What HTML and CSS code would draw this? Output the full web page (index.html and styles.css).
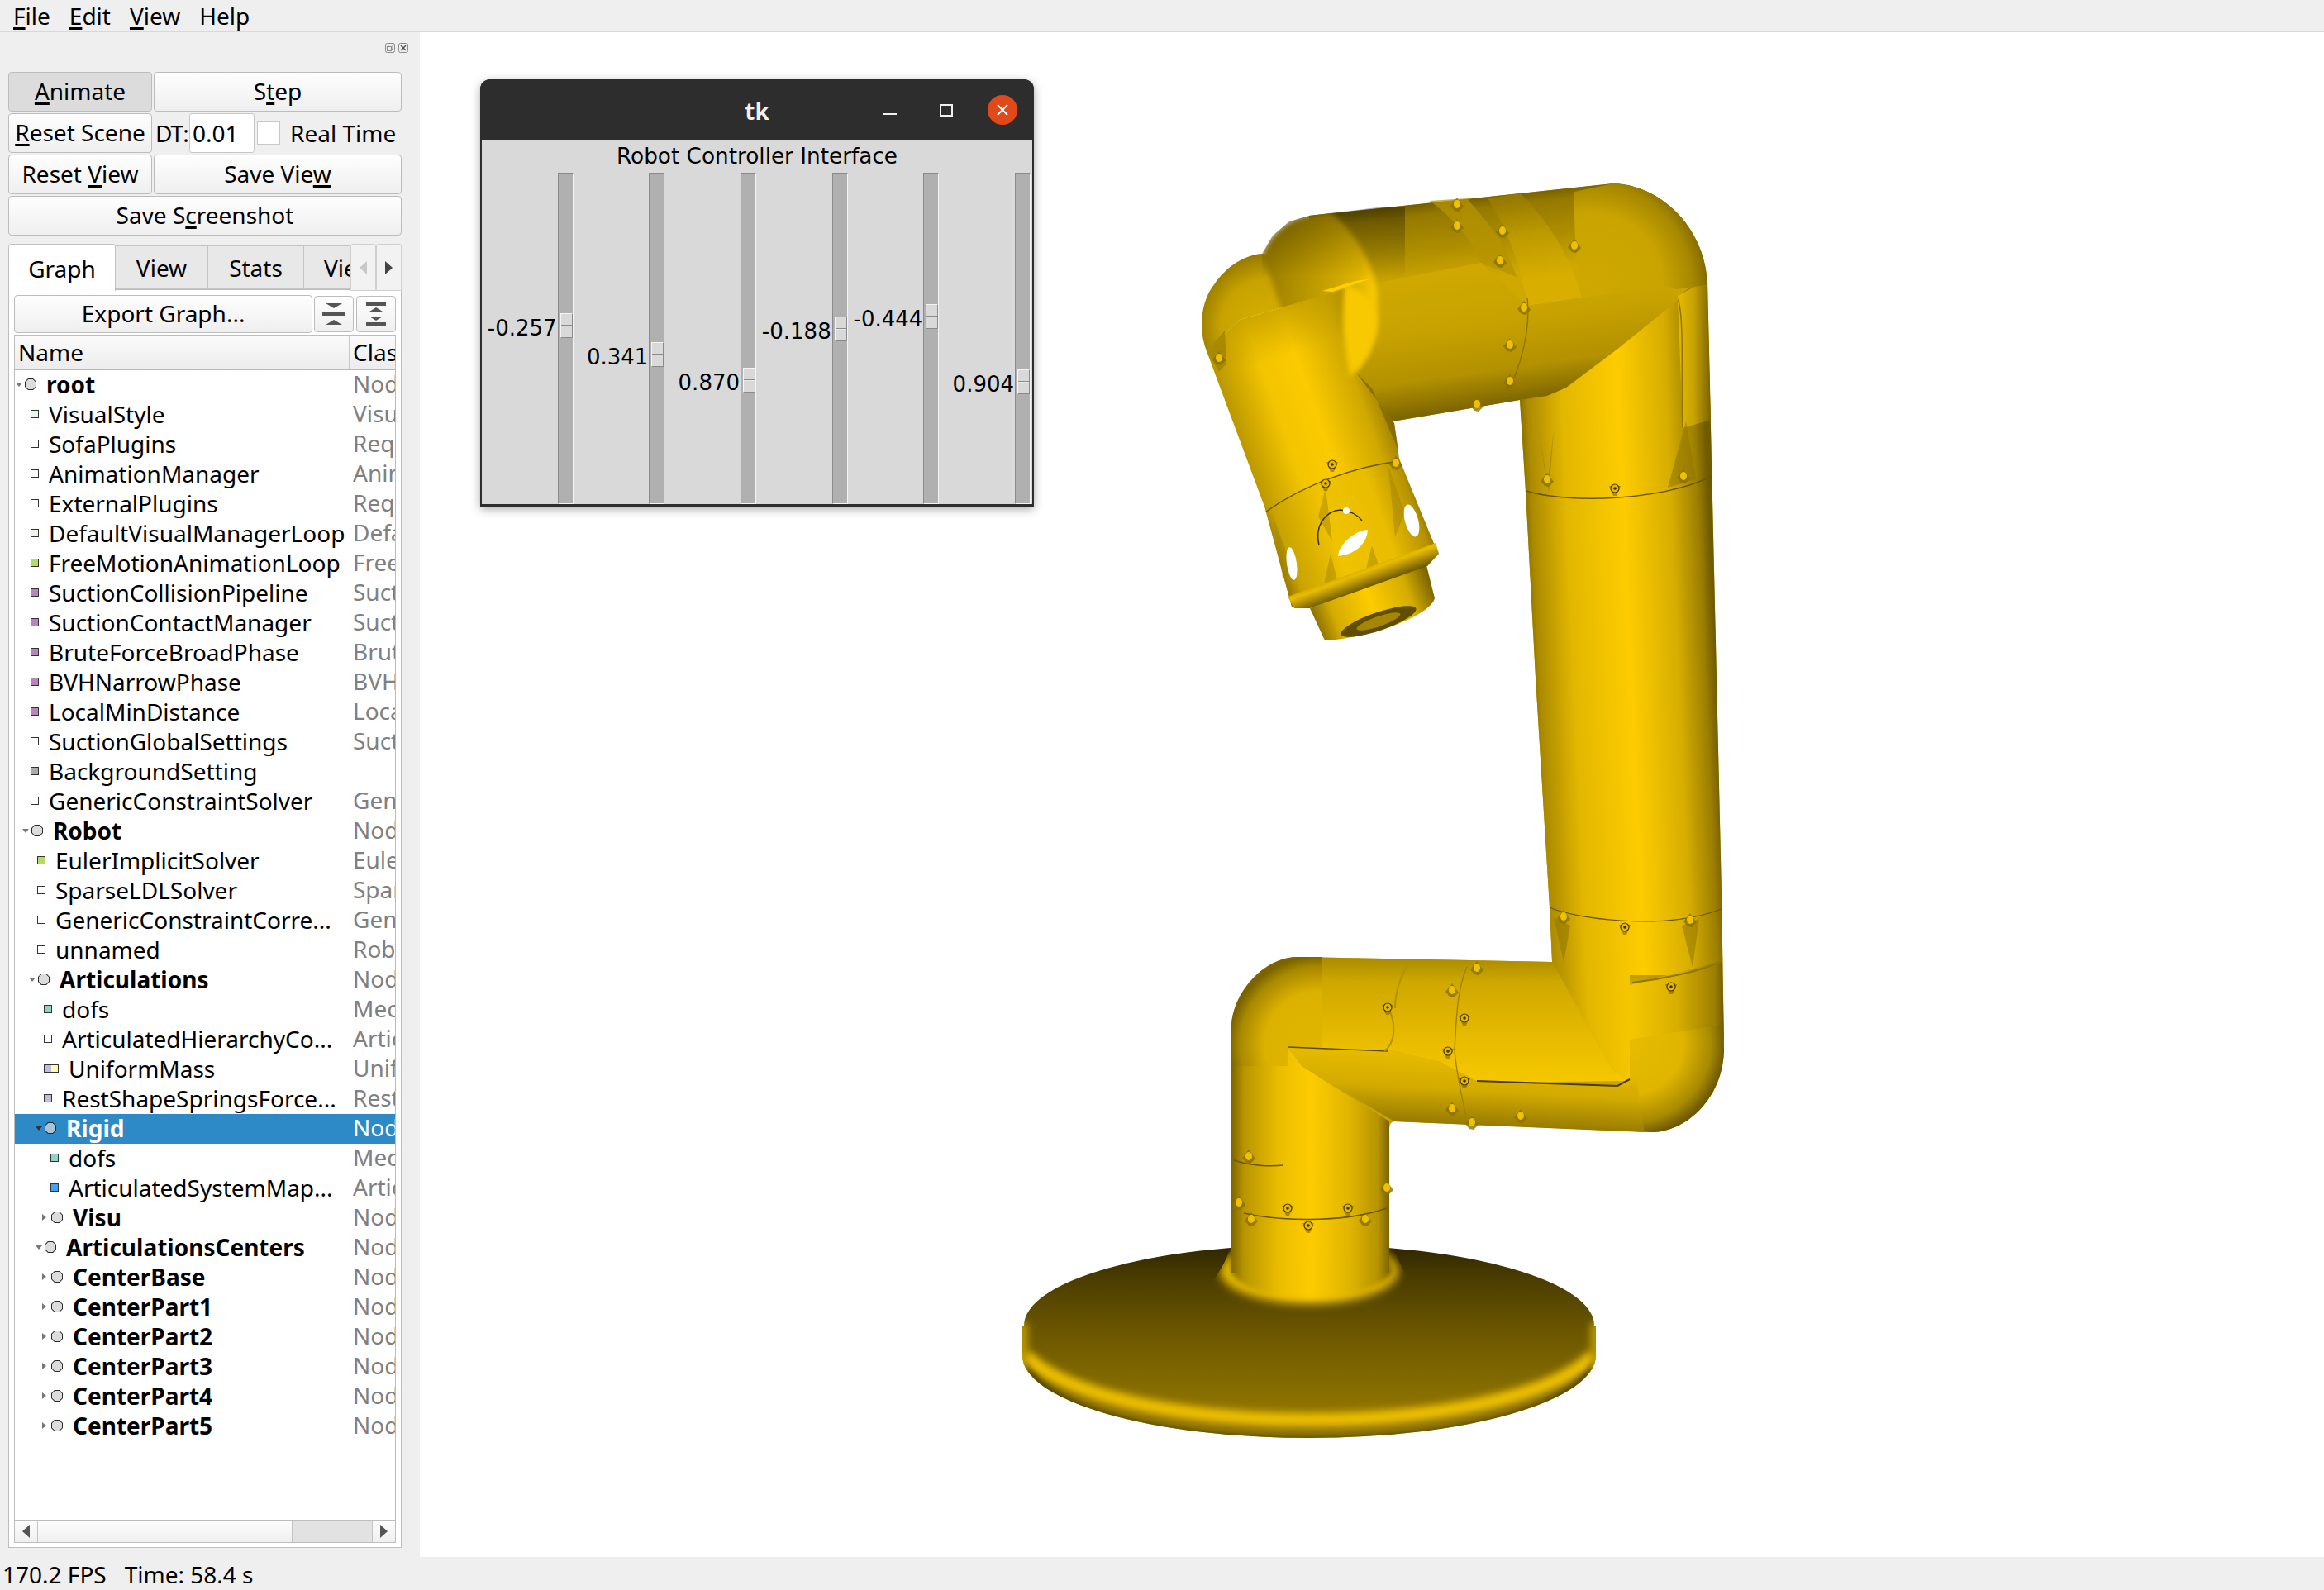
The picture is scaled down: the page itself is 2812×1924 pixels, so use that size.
FILE: index.html
```html
<!DOCTYPE html>
<html lang="en">
<head>
<meta charset="utf-8">
<title>SOFA</title>
<link rel="stylesheet" href="styles.css">
</head>
<body>
<div class="app">
  <nav class="menu">
    <span><u>F</u>ile</span><span><u>E</u>dit</span><span><u>V</u>iew</span><span>Help</span>
  </nav>
  <div class="main">
    <aside class="side">
      <div class="dock-icons">
        <svg width="12" height="12" viewBox="0 0 12 12"><rect x="0.5" y="0.5" width="11" height="11" rx="2" fill="none" stroke="#8a8a8a"/><rect x="4" y="2.5" width="5" height="5" fill="none" stroke="#8a8a8a"/><rect x="2.5" y="4.5" width="5" height="5" fill="#efefef" stroke="#8a8a8a"/></svg>
        <svg width="12" height="12" viewBox="0 0 12 12"><rect x="0.5" y="0.5" width="11" height="11" rx="2" fill="none" stroke="#8a8a8a"/><path d="M3 3l6 6M9 3l-6 6" stroke="#555" stroke-width="1.6"/></svg>
      </div>
      <div class="ctl-row">
        <button class="btn w-left on"><u>A</u>nimate</button>
        <button class="btn grow">S<u>t</u>ep</button>
      </div>
      <div class="ctl-row">
        <button class="btn w-left"><u>R</u>eset Scene</button>
        <span class="dt">DT:</span>
        <span class="input">0.01</span>
        <span class="check"></span>
        <span class="rt">Real Time</span>
      </div>
      <div class="ctl-row">
        <button class="btn w-left">Reset <u>V</u>iew</button>
        <button class="btn grow">Save Vie<u>w</u></button>
      </div>
      <div class="ctl-row">
        <button class="btn grow">Save S<u>c</u>reenshot</button>
      </div>

      <div class="tabs">
        <div class="tabbar">
          <span class="tab active t-graph">Graph</span>
          <span class="tab t-view">View</span>
          <span class="tab t-stats">Stats</span>
          <span class="tab t-vie">Viewer</span>
        </div>
        <div class="tab-scroll">
          <span class="ts"><svg width="10" height="16" viewBox="0 0 10 16"><path d="M9 0v16L0 8z" fill="#c8c8c8"/></svg></span>
          <span class="ts"><svg width="10" height="16" viewBox="0 0 10 16"><path d="M0 0v16l9-8z" fill="#444"/></svg></span>
        </div>
      </div>
      <div class="pane">
        <div class="tools">
          <button class="btn export">Export Graph...</button>
          <button class="btn ico"><svg width="28" height="28" viewBox="0 0 28 28"><path d="M4 1h20L14 7z" fill="#555"/><rect y="12" width="28" height="4" fill="#555"/><path d="M4 27h20L14 21z" fill="#555"/></svg></button>
          <button class="btn ico"><svg width="24" height="28" viewBox="0 0 24 28"><rect width="24" height="4" fill="#555"/><path d="M4 11h16L12 6z" fill="#555"/><path d="M4 17h16l-8 5z" fill="#555"/><rect y="24" width="24" height="4" fill="#555"/></svg></button>
        </div>
        <div class="table">
          <div class="thead"><span class="th-name">Name</span><span class="th-class">Class</span></div>
          <div class="tbody">
            <div class="row node d0"><span class="name"><i class="arr"></i><i class="oct"></i>root</span><span class="cls">Node</span></div>
            <div class="row comp d1"><span class="name"><i class="sq lg"></i>VisualStyle</span><span class="cls">VisualStyle</span></div>
            <div class="row comp d1"><span class="name"><i class="sq wh"></i>SofaPlugins</span><span class="cls">RequiredPlugin</span></div>
            <div class="row comp d1"><span class="name"><i class="sq wh"></i>AnimationManager</span><span class="cls">AnimationManager</span></div>
            <div class="row comp d1"><span class="name"><i class="sq wh"></i>ExternalPlugins</span><span class="cls">RequiredPlugin</span></div>
            <div class="row comp d1"><span class="name"><i class="sq lg"></i>DefaultVisualManagerLoop</span><span class="cls">DefaultVisualManagerLoop</span></div>
            <div class="row comp d1"><span class="name"><i class="sq gr"></i>FreeMotionAnimationLoop</span><span class="cls">FreeMotionAnimationLoop</span></div>
            <div class="row comp d1"><span class="name"><i class="sq pu"></i>SuctionCollisionPipeline</span><span class="cls">SuctionCollisionPipeline</span></div>
            <div class="row comp d1"><span class="name"><i class="sq pu"></i>SuctionContactManager</span><span class="cls">SuctionContactManager</span></div>
            <div class="row comp d1"><span class="name"><i class="sq pu"></i>BruteForceBroadPhase</span><span class="cls">BruteForceBroadPhase</span></div>
            <div class="row comp d1"><span class="name"><i class="sq pu"></i>BVHNarrowPhase</span><span class="cls">BVHNarrowPhase</span></div>
            <div class="row comp d1"><span class="name"><i class="sq pu"></i>LocalMinDistance</span><span class="cls">LocalMinDistance</span></div>
            <div class="row comp d1"><span class="name"><i class="sq wh"></i>SuctionGlobalSettings</span><span class="cls">SuctionGlobalSettings</span></div>
            <div class="row comp d1"><span class="name"><i class="sq gy"></i>BackgroundSetting</span><span class="cls"></span></div>
            <div class="row comp d1"><span class="name"><i class="sq wh"></i>GenericConstraintSolver</span><span class="cls">GenericConstraintSolver</span></div>
            <div class="row node d1"><span class="name"><i class="arr"></i><i class="oct"></i>Robot</span><span class="cls">Node</span></div>
            <div class="row comp d2"><span class="name"><i class="sq gr"></i>EulerImplicitSolver</span><span class="cls">EulerImplicitSolver</span></div>
            <div class="row comp d2"><span class="name"><i class="sq wh"></i>SparseLDLSolver</span><span class="cls">SparseLDLSolver</span></div>
            <div class="row comp d2"><span class="name"><i class="sq wh"></i>GenericConstraintCorre...</span><span class="cls">GenericConstraintCorrection</span></div>
            <div class="row comp d2"><span class="name"><i class="sq wh"></i>unnamed</span><span class="cls">Robot</span></div>
            <div class="row node d2"><span class="name"><i class="arr"></i><i class="oct"></i>Articulations</span><span class="cls">Node</span></div>
            <div class="row comp d3"><span class="name"><i class="sq te"></i>dofs</span><span class="cls">MechanicalObject</span></div>
            <div class="row comp d3"><span class="name"><i class="sq wh"></i>ArticulatedHierarchyCo...</span><span class="cls">ArticulatedHierarchyContainer</span></div>
            <div class="row comp d3"><span class="name"><i class="sq wide"></i>UniformMass</span><span class="cls">UniformMass</span></div>
            <div class="row comp d3"><span class="name"><i class="sq li"></i>RestShapeSpringsForce...</span><span class="cls">RestShapeSpringsForceField</span></div>
            <div class="row node d3 sel"><span class="name"><i class="arr"></i><i class="oct"></i>Rigid</span><span class="cls">Node</span></div>
            <div class="row comp d4"><span class="name"><i class="sq te"></i>dofs</span><span class="cls">MechanicalObject</span></div>
            <div class="row comp d4"><span class="name"><i class="sq bl"></i>ArticulatedSystemMap...</span><span class="cls">ArticulatedSystemMapping</span></div>
            <div class="row node d4 shut"><span class="name"><i class="arr"></i><i class="oct"></i>Visu</span><span class="cls">Node</span></div>
            <div class="row node d3"><span class="name"><i class="arr"></i><i class="oct"></i>ArticulationsCenters</span><span class="cls">Node</span></div>
            <div class="row node d4 shut"><span class="name"><i class="arr"></i><i class="oct"></i>CenterBase</span><span class="cls">Node</span></div>
            <div class="row node d4 shut"><span class="name"><i class="arr"></i><i class="oct"></i>CenterPart1</span><span class="cls">Node</span></div>
            <div class="row node d4 shut"><span class="name"><i class="arr"></i><i class="oct"></i>CenterPart2</span><span class="cls">Node</span></div>
            <div class="row node d4 shut"><span class="name"><i class="arr"></i><i class="oct"></i>CenterPart3</span><span class="cls">Node</span></div>
            <div class="row node d4 shut"><span class="name"><i class="arr"></i><i class="oct"></i>CenterPart4</span><span class="cls">Node</span></div>
            <div class="row node d4 shut"><span class="name"><i class="arr"></i><i class="oct"></i>CenterPart5</span><span class="cls">Node</span></div>
          </div>
          <div class="hscroll">
            <span class="sb-btn"><svg width="10" height="16" viewBox="0 0 10 16"><path d="M9 0v16L0 8z" fill="#555"/></svg></span>
            <span class="sb-thumb"></span>
            <span class="sb-groove"></span>
            <span class="sb-btn"><svg width="10" height="16" viewBox="0 0 10 16"><path d="M0 0v16l9-8z" fill="#555"/></svg></span>
          </div>
        </div>
      </div>
    </aside>

    <section class="view">
      <svg class="robot" width="2304" height="1845" viewBox="508 39 2304 1845" aria-hidden="true">
        <defs>
          <linearGradient id="gBaseTop" gradientUnits="userSpaceOnUse" x1="0" y1="1506" x2="0" y2="1705">
            <stop offset="0" stop-color="#2e2500"/><stop offset=".2" stop-color="#4a3c00"/><stop offset=".55" stop-color="#6d5800"/><stop offset="1" stop-color="#8f7400"/>
          </linearGradient>
          <linearGradient id="gPillar" gradientUnits="userSpaceOnUse" x1="1490" y1="0" x2="1681" y2="0">
            <stop offset="0" stop-color="#7d6500"/><stop offset=".08" stop-color="#b89500"/><stop offset=".3" stop-color="#eabd00"/><stop offset=".5" stop-color="#fdcc00"/><stop offset=".75" stop-color="#e0b500"/><stop offset=".93" stop-color="#b69300"/><stop offset="1" stop-color="#7a6200"/>
          </linearGradient>
          <linearGradient id="gCol" gradientUnits="userSpaceOnUse" x1="1850" y1="900" x2="2080" y2="890">
            <stop offset="0" stop-color="#6f5a00"/><stop offset=".07" stop-color="#ab8a00"/><stop offset=".25" stop-color="#e2b700"/><stop offset=".55" stop-color="#fdcc00"/><stop offset=".8" stop-color="#d7ae00"/><stop offset=".94" stop-color="#9d7f00"/><stop offset="1" stop-color="#6f5a00"/>
          </linearGradient>
          <linearGradient id="gStrip" gradientUnits="userSpaceOnUse" x1="2030" y1="0" x2="2070" y2="0">
            <stop offset="0" stop-color="#e6bb00"/><stop offset=".5" stop-color="#c6a100"/><stop offset="1" stop-color="#7a6300"/>
          </linearGradient>
          <linearGradient id="gArmUp" gradientUnits="userSpaceOnUse" x1="1700" y1="245" x2="1712" y2="345">
            <stop offset="0" stop-color="#6b5700"/><stop offset=".18" stop-color="#957900"/><stop offset=".6" stop-color="#ae8e00"/><stop offset="1" stop-color="#cfa800"/>
          </linearGradient>
          <linearGradient id="gArmLow" gradientUnits="userSpaceOnUse" x1="1730" y1="325" x2="1755" y2="500">
            <stop offset="0" stop-color="#d0a900"/><stop offset=".4" stop-color="#c8a300"/><stop offset=".75" stop-color="#b39100"/><stop offset="1" stop-color="#7a6300"/>
          </linearGradient>
          <linearGradient id="gRing" gradientUnits="userSpaceOnUse" x1="1800" y1="235" x2="1815" y2="345">
            <stop offset="0" stop-color="#8f7400"/><stop offset=".5" stop-color="#bd9a00"/><stop offset="1" stop-color="#d8af00"/>
          </linearGradient>
          <radialGradient id="gElbowT" gradientUnits="userSpaceOnUse" cx="1925" cy="345" r="145">
            <stop offset="0" stop-color="#cfa800"/><stop offset=".6" stop-color="#c9a400"/><stop offset=".85" stop-color="#a68700"/><stop offset="1" stop-color="#7a6300"/>
          </radialGradient>
          <linearGradient id="gBump" gradientUnits="userSpaceOnUse" x1="1530" y1="350" x2="1668" y2="370">
            <stop offset="0" stop-color="#9a7d00"/><stop offset=".4" stop-color="#bc9900"/><stop offset=".8" stop-color="#dfb500"/><stop offset=".95" stop-color="#fbca00"/><stop offset="1" stop-color="#e0b600"/>
          </linearGradient>
          <linearGradient id="gBumpTop" gradientUnits="userSpaceOnUse" x1="0" y1="258" x2="0" y2="335">
            <stop offset="0" stop-color="#000" stop-opacity=".3"/><stop offset="1" stop-color="#000" stop-opacity="0"/>
          </linearGradient>
          <radialGradient id="gShoulder" gradientUnits="userSpaceOnUse" cx="1535" cy="395" r="95">
            <stop offset="0" stop-color="#d8b000"/><stop offset=".6" stop-color="#c8a300"/><stop offset=".9" stop-color="#9a7d00"/><stop offset="1" stop-color="#6f5b00"/>
          </radialGradient>
          <linearGradient id="gFore" gradientUnits="userSpaceOnUse" x1="1470" y1="520" x2="1680" y2="446">
            <stop offset="0" stop-color="#7c6400"/><stop offset=".1" stop-color="#b99600"/><stop offset=".35" stop-color="#f3c500"/><stop offset=".55" stop-color="#fbca00"/><stop offset=".8" stop-color="#d0a900"/><stop offset="1" stop-color="#806700"/>
          </linearGradient>
          <linearGradient id="gForeTop" gradientUnits="userSpaceOnUse" x1="1540" y1="370" x2="1560" y2="430">
            <stop offset="0" stop-color="#bd9a00" stop-opacity=".75"/><stop offset="1" stop-color="#bd9a00" stop-opacity="0"/>
          </linearGradient>
          <linearGradient id="gEnd" gradientUnits="userSpaceOnUse" x1="1540" y1="690" x2="1735" y2="620">
            <stop offset="0" stop-color="#7c6400"/><stop offset=".12" stop-color="#c9a300"/><stop offset=".4" stop-color="#f0c300"/><stop offset=".7" stop-color="#e9bd00"/><stop offset=".9" stop-color="#b69300"/><stop offset="1" stop-color="#6f5a00"/>
          </linearGradient>
          <linearGradient id="gTip" gradientUnits="userSpaceOnUse" x1="1592" y1="770" x2="1735" y2="715">
            <stop offset="0" stop-color="#7c6400"/><stop offset=".2" stop-color="#d5ad00"/><stop offset=".5" stop-color="#fdcc00"/><stop offset=".8" stop-color="#d5ad00"/><stop offset="1" stop-color="#7c6400"/>
          </linearGradient>
          <linearGradient id="gLip" gradientUnits="userSpaceOnUse" x1="1640" y1="680" x2="1652" y2="712">
            <stop offset="0" stop-color="#b39100"/><stop offset=".45" stop-color="#e8bc00"/><stop offset="1" stop-color="#6f5a00"/>
          </linearGradient>
          <linearGradient id="gArm2" gradientUnits="userSpaceOnUse" x1="0" y1="1158" x2="0" y2="1310">
            <stop offset="0" stop-color="#a98a00"/><stop offset=".2" stop-color="#cfa800"/><stop offset=".7" stop-color="#eabd00"/><stop offset="1" stop-color="#f6c800"/>
          </linearGradient>
          <linearGradient id="gArm3" gradientUnits="userSpaceOnUse" x1="1750" y1="1270" x2="1745" y2="1365">
            <stop offset="0" stop-color="#e9bd00"/><stop offset=".5" stop-color="#d3ab00"/><stop offset="1" stop-color="#8f7400"/>
          </linearGradient>
          <radialGradient id="gElbowL" gradientUnits="userSpaceOnUse" cx="1595" cy="1265" r="108">
            <stop offset="0" stop-color="#e0b500"/><stop offset=".6" stop-color="#dcb200"/><stop offset=".88" stop-color="#a78800"/><stop offset="1" stop-color="#7a6300"/>
          </radialGradient>
          <radialGradient id="gElbowR" gradientUnits="userSpaceOnUse" cx="1975" cy="1262" r="112">
            <stop offset="0" stop-color="#e6bb00"/><stop offset=".55" stop-color="#dfb500"/><stop offset=".85" stop-color="#a98a00"/><stop offset="1" stop-color="#6f5a00"/>
          </radialGradient>
          <linearGradient id="gColR" gradientUnits="userSpaceOnUse" x1="1972" y1="0" x2="2086" y2="0">
            <stop offset="0" stop-color="#f5c700"/><stop offset=".5" stop-color="#d9af00"/><stop offset=".9" stop-color="#9d7f00"/><stop offset="1" stop-color="#6f5a00"/>
          </linearGradient>
          <filter id="blur3" x="-20%" y="-20%" width="140%" height="140%"><feGaussianBlur stdDeviation="3"/></filter>
          <filter id="blur5" x="-20%" y="-30%" width="140%" height="160%"><feGaussianBlur stdDeviation="5"/></filter>
          <filter id="blur6" x="-20%" y="-30%" width="140%" height="160%"><feGaussianBlur stdDeviation="6"/></filter>
          <clipPath id="clipBump"><polygon points="1527,307 1540,285 1560,268 1584,261 1700,247 1700,520 1530,520"/></clipPath>
          <clipPath id="clipFlare"><path d="M1490 1505H1681L1690 1520C1700 1545 1720 1560 1720 1600H1450C1450 1560 1480 1545 1490 1505Z"/></clipPath>
          <clipPath id="clipBase">
            <ellipse cx="1584" cy="1640" rx="347" ry="100"/>
            <ellipse cx="1584" cy="1604" rx="345" ry="98"/>
            <rect x="1237" y="1604" width="694" height="36"/>
          </clipPath>
          <g id="mk">
            <path d="M-7-3L7-3L2 9L-2 9Z" fill="#6b5600" opacity=".5"/>
            <circle r="5" fill="#e4b900" stroke="#4a3b00" stroke-width="1.2"/>
            <circle r="1.8" fill="#3d3100"/>
          </g>
          <g id="mb">
            <path d="M-8 2L0-8L8 3L2 9L-3 8Z" fill="#8a7000" opacity=".8"/>
            <ellipse rx="4" ry="5" fill="#efc200"/>
          </g>
        </defs>

        <!-- base -->
        <g clip-path="url(#clipBase)">
          <rect x="1237" y="1500" width="694" height="245" fill="url(#gBaseTop)"/>
          <path d="M1240 1640C1290 1690 1430 1718 1584 1718C1740 1718 1880 1690 1928 1640" fill="none" stroke="#eec000" stroke-width="16" filter="url(#blur5)"/>
          <path d="M1237 1650C1270 1710 1420 1743 1584 1743C1750 1743 1900 1710 1931 1650" fill="none" stroke="#554500" stroke-width="8" filter="url(#blur3)"/>
          <path d="M1238 1600V1660M1930 1600V1660" fill="none" stroke="#c6a100" stroke-width="10" filter="url(#blur5)"/>
        </g>
        <g clip-path="url(#clipFlare)">
          <ellipse cx="1584" cy="1538" rx="108" ry="40" fill="#e7bc00" filter="url(#blur6)"/>
        </g>

        <!-- body underlay -->
        <path d="M1584 261L1952 222C2012 224 2064 278 2066 345L2070 516L2077 820L2083 1080L2086 1272C2084 1330 2040 1370 1998 1370L1687 1357Q1681 1358 1681 1366L1681 1540L1490 1540L1490 1241C1492 1200 1530 1158 1570 1158L1878 1164L1875 1098L1858 820L1846 595L1839 484L1685 510L1640 450Z" fill="#c9a300"/>

        <!-- upper column -->
        <polygon points="1839,484 1846,595 1858,820 1875,1098 1878,1164 1951,1294 1972,1308 2086,1260 2083,1080 2077,820 2070,516 2065,334 2030,358 1960,420 1895,469 1872,479" fill="url(#gCol)"/>
        <polygon points="2030,358 2066,338 2070,508 2036,518" fill="url(#gStrip)"/>
        <path d="M2030 362C2038 380 2034 450 2036 518" fill="none" stroke="#8f7400" stroke-width="1.5"/>
        <path d="M1846 594C1900 610 2010 606 2072 576" fill="none" stroke="#6b5600" stroke-width="1.5"/>
        <g fill="#8f7400" opacity=".55">
          <polygon points="1862,520 1874,596 1880,520 1872,590"/>
          <polygon points="2040,510 2018,590 2052,580"/>
          <polygon points="1880,1110 1892,1165 1900,1120"/>
          <polygon points="2035,1120 2048,1170 2056,1112"/>
        </g>

        <!-- upper arm -->
        <path d="M1584 261L1952 222C2012 224 2064 278 2066 345L2028 350L2018 347L1914 360L1848 370L1792 318L1631 348L1584 350Z" fill="url(#gArmUp)"/>
        <path d="M1905 232L1952 222C2012 224 2064 278 2066 345L2028 350L2018 347L1914 360C1905 310 1905 270 1905 232Z" fill="url(#gElbowT)"/>
        <path d="M1800 240L1840 234C1875 270 1900 310 1914 360L1848 370C1840 320 1825 280 1800 240Z" fill="url(#gRing)"/>
        <path d="M1730 243L1775 240C1800 270 1820 290 1835 335L1792 318C1780 290 1760 265 1730 243Z" fill="#b69400" opacity=".75"/>
        <polygon points="1627,350 1792,318 1848,370 1914,360 2018,347 2032,362 1960,420 1895,469 1872,479 1839,484 1685,510 1640,450" fill="url(#gArmLow)"/>
        <path d="M1848 360C1852 395 1842 445 1820 480" fill="none" stroke="#8f7400" stroke-width="1.4"/>

        <!-- shoulder bumps -->
        <path d="M1460 425C1450 400 1452 365 1470 343C1485 322 1505 309 1527 307C1560 310 1590 330 1600 358L1500 387Z" fill="url(#gShoulder)"/>
        <g clip-path="url(#clipBump)">
          <path d="M1527 307C1540 280 1560 264 1590 259L1610 257C1650 290 1672 340 1668 385C1665 420 1650 440 1635 455L1560 400Z" fill="url(#gBump)" filter="url(#blur3)"/>
          <path d="M1520 250H1700V345H1520Z" fill="url(#gBumpTop)"/>
        </g>

        <!-- forearm -->
        <polygon points="1460,425 1500,387 1627,350 1640,450 1687,512 1693,555 1740,670 1563,734 1530,613" fill="url(#gFore)"/>
        <polygon points="1460,425 1500,387 1627,350 1640,440 1480,450" fill="url(#gForeTop)"/>
        <g clip-path="url(#clipBump)">
          <path d="M1628 345C1650 350 1668 370 1666 395C1662 420 1650 440 1634 456C1625 420 1622 380 1628 345Z" fill="#f8c900" filter="url(#blur3)"/>
        </g>
        <path d="M1612 353L1660 337L1640 340L1600 352Z" fill="#ffcf00"/>
        <path d="M1640 450L1687 512L1692 545L1660 470Z" fill="#7a6300" opacity=".7"/>
        <path d="M1460 425L1482 400L1484 440L1475 450Z" fill="#a88900"/>
        <path d="M1532 619C1580 585 1640 565 1693 558L1740 670L1718 680L1580 728L1563 734Z" fill="url(#gEnd)"/>
        <path d="M1532 619C1580 585 1640 565 1693 558" fill="none" stroke="#6b5600" stroke-width="1.5"/>
        <g fill="#a08200" opacity=".45">
          <polygon points="1604,590 1612,655 1595,625"/>
          <polygon points="1680,565 1700,620 1688,650"/>
          <polygon points="1540,625 1565,690 1552,700"/>
          <polygon points="1610,670 1620,710 1600,715"/>
          <polygon points="1660,660 1672,695 1650,700"/>
        </g>
        <path d="M1596 660C1590 635 1605 618 1622 617C1632 618 1642 622 1648 630" fill="none" stroke="#3d3100" stroke-width="1.4"/>
        <path d="M1619 673C1620 658 1640 642 1655 641C1654 655 1644 670 1619 673Z" fill="#fff"/>
        <circle cx="1629" cy="618" r="4" fill="#fff"/>
        <ellipse cx="1708" cy="630" rx="8" ry="20" transform="rotate(-15 1708 630)" fill="#fff"/>
        <ellipse cx="1563" cy="682" rx="6" ry="20" transform="rotate(-8 1563 682)" fill="#fff"/>

        <!-- flange and tip -->
        <path d="M1585 736L1726 684L1736 724C1730 745 1660 772 1603 775Z" fill="url(#gTip)"/>
        <path d="M1558 722L1737 657L1741 670L1727 685L1585 736L1566 736Z" fill="url(#gLip)"/>
        <ellipse cx="1668" cy="752" rx="48" ry="11" transform="rotate(-19 1668 752)" fill="#5f4d00"/>
        <ellipse cx="1668" cy="752" rx="28" ry="6" transform="rotate(-19 1668 752)" fill="#a68600"/>

        <!-- lower arm -->
        <path d="M2084 1180L2086 1272C2084 1330 2040 1370 1998 1370L1960 1368L1950 1314L1972 1308L1972 1180Z" fill="url(#gElbowR)"/>
        <polygon points="1972,1192 2083,1163 2085,1240 1972,1258" fill="url(#gColR)"/>
        <path d="M1570 1158L1878 1164L1951 1294L1972 1308L1787 1310L1743 1285L1687 1272L1558 1267L1540 1200Z" fill="url(#gArm2)"/>
        <path d="M1490 1241C1492 1200 1530 1158 1570 1158L1600 1158L1600 1267L1558 1267L1558 1300L1490 1300Z" fill="url(#gElbowL)"/>
        <path d="M1875 1098C1900 1110 2010 1128 2083 1100" fill="none" stroke="#6b5600" stroke-width="1.2"/>
        <path d="M1975 1189C2010 1185 2060 1175 2083 1163" fill="none" stroke="#8f7400" stroke-width="2"/>
        <path d="M1558 1267L1687 1272L1743 1285L1787 1308L1969 1314L1980 1310L1990 1370L1800 1362L1687 1357L1575 1290Z" fill="url(#gArm3)"/>
        <path d="M1787 1308L1957 1314L1972 1306" fill="none" stroke="#4a3b00" stroke-width="2"/>
        <path d="M1558 1267L1680 1272" fill="none" stroke="#5c4a00" stroke-width="1.5"/>
        <path d="M1680 1220C1690 1240 1688 1262 1675 1272" fill="none" stroke="#b39100" stroke-width="2"/>
        <path d="M1707 1162C1695 1180 1688 1200 1688 1220" fill="none" stroke="#b39100" stroke-width="2"/>
        <path d="M1775 1170C1762 1200 1762 1240 1760 1270C1762 1300 1770 1330 1775 1358" fill="none" stroke="#a08200" stroke-width="1.4"/>

        <!-- pillar -->
        <path d="M1490 1290L1558 1290L1558 1267L1575 1290L1681 1357L1681 1513L1681 1540L1490 1540Z" fill="url(#gPillar)"/>
        <path d="M1493 1404C1510 1410 1535 1412 1552 1410" fill="none" stroke="#6b5600" stroke-width="1.5"/>
        <path d="M1505 1468C1540 1476 1620 1482 1678 1462" fill="none" stroke="#6b5600" stroke-width="1.5"/>
        <path d="M1490 1540C1510 1580 1650 1585 1685 1540L1681 1520H1490Z" fill="url(#gPillar)" filter="url(#blur3)" clip-path="url(#clipFlare)"/>

        <!-- fasteners -->
        <use href="#mb" x="1763" y="273"/><use href="#mb" x="1818" y="279"/><use href="#mb" x="1815" y="315"/><use href="#mb" x="1844" y="372"/>
        <use href="#mb" x="1827" y="417"/><use href="#mb" x="1827" y="461"/><use href="#mb" x="1787" y="489"/><use href="#mb" x="1475" y="433"/>
        <use href="#mb" x="1763" y="247"/><use href="#mb" x="1905" y="297"/>
        <use href="#mb" x="1872" y="580"/><use href="#mb" x="2037" y="576"/><use href="#mb" x="1689" y="560"/>
        <use href="#mk" x="1954" y="591"/><use href="#mk" x="1612" y="562"/><use href="#mk" x="1604" y="585"/>
        <use href="#mk" x="1679" y="1219"/><use href="#mk" x="1772" y="1232"/><use href="#mk" x="1752" y="1272"/><use href="#mk" x="1772" y="1308"/>
        <use href="#mb" x="1757" y="1341"/><use href="#mb" x="1840" y="1350"/><use href="#mb" x="1781" y="1358"/><use href="#mb" x="1787" y="1171"/><use href="#mb" x="1757" y="1198"/>
        <use href="#mk" x="2022" y="1194"/><use href="#mk" x="1966" y="1122"/><use href="#mb" x="1892" y="1109"/><use href="#mb" x="2045" y="1113"/>
        <use href="#mb" x="1511" y="1399"/><use href="#mb" x="1499" y="1455"/><use href="#mk" x="1558" y="1462"/><use href="#mk" x="1631" y="1462"/><use href="#mk" x="1583" y="1483"/>
        <use href="#mb" x="1514" y="1475"/><use href="#mb" x="1652" y="1475"/><use href="#mb" x="1678" y="1437"/>
      </svg>

      <div class="tk">
        <header class="tk-title">
          <span class="tk-name">tk</span>
          <span class="tk-min"></span>
          <span class="tk-max"></span>
          <span class="tk-close"><svg width="16" height="16" viewBox="0 0 16 16"><path d="M2 2l12 12M14 2L2 14" stroke="#fff" stroke-width="2"/></svg></span>
        </header>
        <div class="tk-body">
          <div class="tk-head">Robot Controller Interface</div>
          <div class="tk-scales">
            <div class="scale" style="--top:170px"><span class="val">-0.257</span><span class="thumb"></span></div>
            <div class="scale" style="--top:205px"><span class="val">0.341</span><span class="thumb"></span></div>
            <div class="scale" style="--top:236px"><span class="val">0.870</span><span class="thumb"></span></div>
            <div class="scale" style="--top:174px"><span class="val">-0.188</span><span class="thumb"></span></div>
            <div class="scale" style="--top:159px"><span class="val">-0.444</span><span class="thumb"></span></div>
            <div class="scale" style="--top:238px"><span class="val">0.904</span><span class="thumb"></span></div>
          </div>
        </div>
      </div>
    </section>
  </div>
  <footer class="status"><span>170.2 FPS</span><span>Time: 58.4 s</span></footer>
</div>
</body>
</html>
```
FILE: styles.css
```css
* { box-sizing: border-box; }
html, body { margin: 0; height: 100%; }
body {
  font-family: "Noto Sans", "Open Sans", sans-serif;
  font-size: 28px;
  color: #000;
  background: #efefef;
  overflow: hidden;
}
u { text-decoration-thickness: 3px; text-underline-offset: 3px; }
.app { display: flex; flex-direction: column; height: 1924px; width: 2812px; }

.menu {
  height: 39px; flex: none;
  display: flex; align-items: center; gap: 23px;
  padding: 0 0 0 16px;
  background: #efefef;
  border-bottom: 1px solid #d8d8d8;
  line-height: 38px;
}

.main { flex: 1; display: flex; min-height: 0; }
.side {
  width: 508px; flex: none;
  padding: 0 22px 11px 10px;
  display: flex; flex-direction: column;
  background: #efefef;
}
.dock-icons { height: 48px; flex: none; display: flex; justify-content: flex-end; gap: 4px; padding: 13px 0 0 0; margin-right: -8px; }

.ctl-row { height: 48px; flex: none; display: flex; align-items: stretch; margin-bottom: 2px; }
.btn {
  font: inherit; color: #000; padding: 0 0 2px;
  border: 1px solid #bcbcbc; border-radius: 4px;
  background: linear-gradient(#fefefe, #efefef);
  line-height: 1;
}
.btn.on { background: #dcdcdc; }
.w-left { width: 174px; flex: none; margin-right: 2px; }
.grow { flex: 1; }
.dt { width: 43px; flex: none; padding-left: 2px; line-height: 48px; letter-spacing: -1px; }
.input { width: 79px; flex: none; background: #fff; border: 1px solid #c8c8c8; border-radius: 3px; padding-left: 3px; line-height: 46px; }
.check { width: 28px; height: 28px; flex: none; margin: 10px 0 0 3px; background: #fff; border: 1px solid #c8c8c8; }
.rt { margin-left: 12px; line-height: 48px; white-space: nowrap; }

.tabs { margin-top: 8px; height: 57px; flex: none; position: relative; }
.tabbar { display: flex; width: 414px; height: 57px; overflow: hidden; }
.tab {
  flex: none; margin-top: 2px; height: 53px; line-height: 52px; text-align: center;
  background: #e8e8e8; border: 1px solid #c4c4c4; border-left: 0; white-space: nowrap;
}
.tab.active { margin-top: 0; height: 57px; background: #fff; border: 1px solid #c0c0c0; border-bottom: 0; border-radius: 4px 4px 0 0; line-height: 58px; position: relative; z-index: 1; }
.t-graph { width: 130px; }
.t-view { width: 112px; }
.t-stats { width: 116px; }
.t-vie { width: 90px; text-align: left; padding-left: 24px; }
.tab-scroll { position: absolute; right: 0; top: 0; display: flex; z-index: 2; }
.ts { width: 31px; height: 57px; display: flex; align-items: center; justify-content: center; background: #f2f2f2; border: 1px solid #d0d0d0; border-radius: 3px 3px 0 0; }

.pane {
  flex: 1; min-height: 0; margin-top: -2px;
  padding: 6px 6px 5px 6px;
  background: #fff;
  border: 1px solid #bdbdbd;
  display: flex; flex-direction: column;
}
.tools { display: flex; height: 46px; flex: none; gap: 2px; margin-bottom: 2px; }
.export { width: 362px; }
.ico { width: 48px; height: 44px; margin-top: 1px; display: flex; align-items: center; justify-content: center; padding: 0; }
.ico + .ico { margin-left: 1px; }

.table { flex: 1; min-height: 0; border: 1px solid #bdbdbd; display: flex; flex-direction: column; background: #fff; }
.thead { height: 42px; flex: none; display: flex; line-height: 40px; background: linear-gradient(#fbfbfb, #ececec); border-bottom: 1px solid #b8b8b8; }
.th-name { width: 405px; flex: none; padding-left: 4px; border-right: 1px solid #c8c8c8; }
.th-class { flex: 1; padding-left: 4px; overflow: hidden; white-space: nowrap; }

.tbody { flex: 1; min-height: 0; overflow: hidden; }
.row { height: 36px; display: flex; line-height: 33px; white-space: nowrap; }
.name { width: 405px; height: 34px; flex: none; display: flex; align-items: center; }
.cls { flex: 1; min-width: 0; padding-left: 4px; color: #808080; overflow: hidden; height: 36px; }
.d0 { --i: 0px; } .d1 { --i: 8px; } .d2 { --i: 16px; } .d3 { --i: 24px; } .d4 { --i: 32px; }
.node .name { padding-left: calc(1px + var(--i)); font-weight: 700; }
.comp .name { padding-left: calc(11px + var(--i)); }
.arr { flex: none; width: 0; height: 0; margin-right: 3px; border-left: 4px solid transparent; border-right: 4px solid transparent; border-top: 5px solid #777; }
.shut .arr { border-left: 5px solid #777; border-right: 0; border-top: 4px solid transparent; border-bottom: 4px solid transparent; margin: 0 6px 0 0; width: 5px; }
.node .name .arr + .oct { margin-right: 12px; }
.oct {
  flex: none; width: 14px; height: 14px; background: #2a2a2a;
  clip-path: polygon(28% 0, 72% 0, 100% 28%, 100% 72%, 72% 100%, 28% 100%, 0 72%, 0 28%);
  position: relative;
}
.oct::after {
  content: ""; position: absolute; inset: 1px; background: #dcdcdc;
  clip-path: polygon(28% 0, 72% 0, 100% 28%, 100% 72%, 72% 100%, 28% 100%, 0 72%, 0 28%);
}
.sq { flex: none; width: 10px; height: 10px; margin-right: 12px; border: 1px solid #333; background: #fff; }
.sq.wh { background: #fff; } .sq.lg { background: #e8f8e4; } .sq.gr { background: #b2dc68; }
.sq.pu { background: #b784bc; } .sq.gy { background: #ababab; } .sq.te { background: #8fd5c5; }
.sq.li { background: #c0bcde; } .sq.bl { background: #42a0f5; }
.sq.wide { width: 18px; background: linear-gradient(90deg, #c0bcde 50%, #fdfdb0 50%); }
.sel { background: #2e8ac6; color: #fff; }
.sel .cls { color: #fff; }
.sel .oct::after { background: #a9c4d8; }
.sel .arr { border-top-color: #333; }

.hscroll { height: 27px; flex: none; display: flex; border-top: 1px solid #bdbdbd; }
.sb-btn { width: 28px; flex: none; display: flex; align-items: center; justify-content: center; background: linear-gradient(#fdfdfd, #f0f0f0); border-right: 1px solid #c4c4c4; }
.sb-btn:last-child { border-right: 0; border-left: 1px solid #c4c4c4; }
.sb-thumb { width: 308px; flex: none; background: linear-gradient(#fdfdfd, #f0f0f0); border-right: 1px solid #c4c4c4; }
.sb-groove { flex: 1; background: #e2e2e2; }

.view { flex: 1; position: relative; background: #fff; min-width: 0; }
.robot { position: absolute; left: 0; top: 0; }

.status { height: 40px; flex: none; display: flex; gap: 22px; padding-left: 3px; line-height: 42px; background: #efefef; }

.tk {
  position: absolute; left: 73px; top: 57px; width: 670px; height: 517px;
  display: flex; flex-direction: column;
  border-radius: 12px 12px 0 0;
  box-shadow: 0 3px 12px rgba(0,0,0,.35);
  overflow: hidden;
  background: #2d2d2d;
}
.tk-title { height: 74px; flex: none; position: relative; background: #2d2d2d; color: #f2f2f2; }
.tk-name { position: absolute; left: 0; right: 0; top: 18px; text-align: center; font-weight: 700; line-height: 40px; }
.tk-min { position: absolute; left: 488px; top: 41px; width: 16px; height: 2px; background: #f0f0f0; }
.tk-max { position: absolute; left: 556px; top: 30px; width: 16px; height: 15px; border: 2px solid #f0f0f0; }
.tk-close { position: absolute; left: 614px; top: 19px; width: 36px; height: 36px; border-radius: 50%; background: #e2491a; display: flex; align-items: center; justify-content: center; }
.tk-body { flex: 1; min-height: 0; margin: 0 2px 3px; background: #d9d9d9; display: flex; flex-direction: column; font-family: "DejaVu Sans", sans-serif; font-size: 26px; }
.tk-head { height: 39px; flex: none; text-align: center; line-height: 38px; font-size: 26.3px; white-space: nowrap; }
.tk-scales { flex: 1; display: flex; min-height: 0; padding-right: 2px; }
.scale { flex: 1; position: relative; }
.scale::before {
  content: ""; position: absolute; right: 0; top: 0; bottom: 0; width: 17px;
  background: #b0b0b0; border-left: 1px solid #8a8a8a; border-top: 1px solid #8a8a8a; border-right: 1px solid #f4f4f4; border-bottom: 1px solid #f4f4f4;
}
.thumb {
  position: absolute; right: 1px; width: 15px; height: 30px; top: var(--top);
  background: linear-gradient(#d9d9d9 47%, #8a8a8a 47%, #8a8a8a 50%, #f6f6f6 50%, #d9d9d9 54%);
  border: 1px solid #f4f4f4; border-right-color: #8a8a8a; border-bottom-color: #8a8a8a;
}
.val { position: absolute; right: 20px; top: var(--top); line-height: 36px; }
```
